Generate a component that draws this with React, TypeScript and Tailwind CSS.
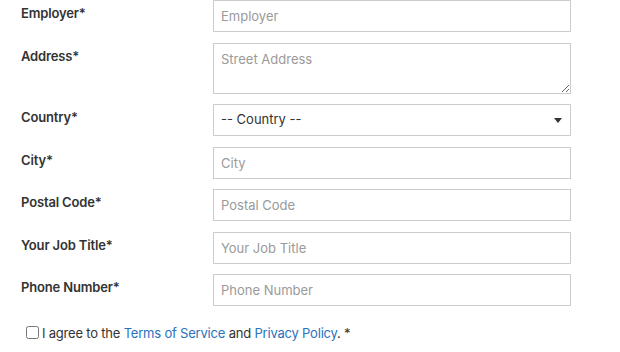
const fields = [
  { label: "Employer*", placeholder: "Employer", kind: "input" },
  { label: "Address*", placeholder: "Street Address", kind: "textarea" },
  { label: "Country*", placeholder: "-- Country --", kind: "select" },
  { label: "City*", placeholder: "City", kind: "input" },
  { label: "Postal Code*", placeholder: "Postal Code", kind: "input" },
  { label: "Your Job Title*", placeholder: "Your Job Title", kind: "input" },
  { label: "Phone Number*", placeholder: "Phone Number", kind: "input" },
];

const box =
  "w-full rounded-none border border-[#cccccc] bg-white px-[7px] text-[13px] text-[#333333] outline-none placeholder:text-[#9a9a9a]";

export default function App() {
  return (
    <div className="min-h-screen bg-white font-['Inter','Liberation_Sans',sans-serif] text-[#333333]">
      <form className="flex flex-col gap-[10.5px] pl-[21px]">
        {fields.map((f) => (
          <div className="grid grid-cols-[192px_358px]" key={f.label}>
            <label className="pt-[5px] text-[13px] leading-4 font-semibold tracking-[-0.15px]">
              {f.label}
            </label>
            {f.kind === "input" && (
              <input className={`${box} h-[32px]`} placeholder={f.placeholder} />
            )}
            {f.kind === "textarea" && (
              <textarea
                className={`${box} block h-[51px] resize-y pt-[7px] leading-4`}
                placeholder={f.placeholder}
              />
            )}
            {f.kind === "select" && (
              <div className="relative">
                <select className={`${box} h-[32px] appearance-none`} defaultValue="">
                  <option value="">{f.placeholder}</option>
                </select>
                <span className="pointer-events-none absolute top-[14px] right-[9px] h-0 w-0 border-x-[4px] border-t-[5px] border-x-transparent border-t-[#333333]" />
              </div>
            )}
          </div>
        ))}
        <label className="mt-[8px] flex items-center pl-[5px] text-[13px] leading-4 tracking-[-0.2px]">
          <input type="checkbox" className="mr-[3px] h-[13px] w-[13px]" />
          <span>
            I agree to the <a className="text-[#2a72bd]" href="#">Terms of Service</a> and{" "}
            <a className="text-[#2a72bd]" href="#">Privacy Policy</a>. *
          </span>
        </label>
      </form>
    </div>
  );
}
